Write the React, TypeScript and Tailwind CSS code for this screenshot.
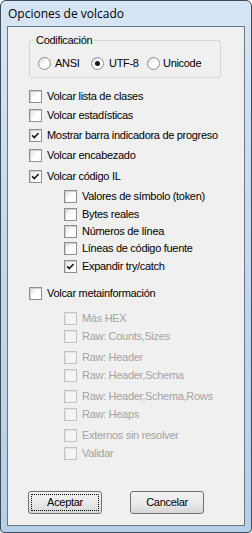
import React from 'react';

type Row = { label: string; checked?: boolean; sub?: boolean; disabled?: boolean; mt: string };

const rows: Row[] = [
    { label: 'Volcar lista de clases', mt: 'mt-[12px]' },
    { label: 'Volcar estadísticas', mt: 'mt-[6px]' },
    { label: 'Mostrar barra indicadora de progreso', checked: true, mt: 'mt-[7px]' },
    { label: 'Volcar encabezado', mt: 'mt-[7px]' },
    { label: 'Volcar código IL', checked: true, mt: 'mt-[8px]' },
    { label: 'Valores de símbolo (token)', sub: true, mt: 'mt-[7px]' },
    { label: 'Bytes reales', sub: true, mt: 'mt-[5px]' },
    { label: 'Números de línea', sub: true, mt: 'mt-[4px]' },
    { label: 'Líneas de código fuente', sub: true, mt: 'mt-[4px]' },
    { label: 'Expandir try/catch', sub: true, checked: true, mt: 'mt-[5px]' },
    { label: 'Volcar metainformación', mt: 'mt-[14px]' },
    { label: 'Más HEX', sub: true, disabled: true, mt: 'mt-[12px]' },
    { label: 'Raw: Counts,Sizes', sub: true, disabled: true, mt: 'mt-[5px]' },
    { label: 'Raw: Header', sub: true, disabled: true, mt: 'mt-[8px]' },
    { label: 'Raw: Header,Schema', sub: true, disabled: true, mt: 'mt-[5px]' },
    { label: 'Raw: Header,Schema,Rows', sub: true, disabled: true, mt: 'mt-[8px]' },
    { label: 'Raw: Heaps', sub: true, disabled: true, mt: 'mt-[5px]' },
    { label: 'Externos sin resolver', sub: true, disabled: true, mt: 'mt-[8px]' },
    { label: 'Validar', sub: true, disabled: true, mt: 'mt-[5px]' },
];

function CheckBox({ checked, disabled }: { checked?: boolean; disabled?: boolean }) {
    return (
        <span
            className={
                disabled
                    ? 'w-[13px] h-[13px] shrink-0 border border-[#c3c3c3] bg-[#f4f4f4] shadow-[inset_1px_1px_0_#e3e3e3]'
                    : 'w-[13px] h-[13px] shrink-0 border border-[#8e8f8f] bg-gradient-to-br from-[#dcdcdc] via-white to-white shadow-[inset_1px_1px_0_#d0d0d0] relative'
            }
        >
            {checked && (
                <svg width="11" height="11" viewBox="0 0 11 11" className="absolute left-0 top-0">
                    <path d="M2.2 5.4 L4.3 7.5 L8.6 3" stroke="#1a1a1a" strokeWidth="1.7" fill="none" />
                </svg>
            )}
        </span>
    );
}

function Radio({ checked }: { checked?: boolean }) {
    return (
        <span className="w-[13px] h-[13px] shrink-0 rounded-full border border-[#8e8f8f] bg-gradient-to-br from-[#d8d8d8] via-white to-white flex items-center justify-center">
            {checked && <span className="w-[5px] h-[5px] rounded-full bg-[#1a1a1a]" />}
        </span>
    );
}

export default function App() {
    return (
        <div className="w-[252px] h-[533px] rounded-t-[6px] rounded-b-[4px] border border-[#3e4a57] bg-gradient-to-b from-[#d6e5f5] via-[#c3d8ee] to-[#b6cfe9] flex flex-col font-['Liberation_Sans',Arial,sans-serif] text-[11px] leading-[13px] tracking-[-0.3px] text-black">
            {/* Title bar */}
            <div className="h-[25px] shrink-0 pl-[7px] pt-[6px] text-[12px] leading-[14px] tracking-normal font-['Open_Sans','Liberation_Sans',sans-serif] text-black">
                Opciones de volcado
            </div>

            {/* Client area */}
            <div className="mx-[6px] mb-[6px] flex-1 border border-[#6b7682] bg-[#f0f0f0] flex flex-col pl-[21px]">
                {/* Codificación group */}
                <div className="mt-[13px] w-[192px] h-[38px] border border-[#d5d5d5] rounded-[3px] relative pl-[8px] pt-[16px] flex items-start">
                    <span className="absolute left-[4px] top-[-7px] bg-[#f0f0f0] px-[2px]">Codificación</span>
                    <div className="w-[53px] flex items-center gap-[4px] h-[13px]">
                        <Radio />
                        <span>ANSI</span>
                    </div>
                    <div className="w-[56px] flex items-center gap-[5px] h-[13px]">
                        <Radio checked />
                        <span>UTF-8</span>
                    </div>
                    <div className="flex items-center gap-[3px] h-[13px]">
                        <Radio />
                        <span>Unicode</span>
                    </div>
                </div>

                {rows.map((r) => (
                    <div key={r.label} className={`flex items-center gap-[5px] h-[13px] ${r.mt} ${r.sub ? 'ml-[35px]' : ''}`}>
                        <CheckBox checked={r.checked} disabled={r.disabled} />
                        <span className={r.disabled ? 'text-[#a3a3a3] whitespace-nowrap' : 'whitespace-nowrap'}>{r.label}</span>
                    </div>
                ))}

                {/* Buttons */}
                <div className="mt-[31px] flex gap-[28px] -ml-[1px]">
                    <button className="w-[74px] h-[23px] rounded-[3px] border border-[#707070] bg-gradient-to-b from-[#f2f2f2] via-[#ebebeb] to-[#d6d6d6] p-[2px]">
                        <span className="w-full h-full flex items-center justify-center border border-dotted border-black">Aceptar</span>
                    </button>
                    <button className="w-[74px] h-[23px] rounded-[3px] border border-[#707070] bg-gradient-to-b from-[#f2f2f2] via-[#ebebeb] to-[#d6d6d6] flex items-center justify-center">
                        Cancelar
                    </button>
                </div>
            </div>
        </div>
    );
}
